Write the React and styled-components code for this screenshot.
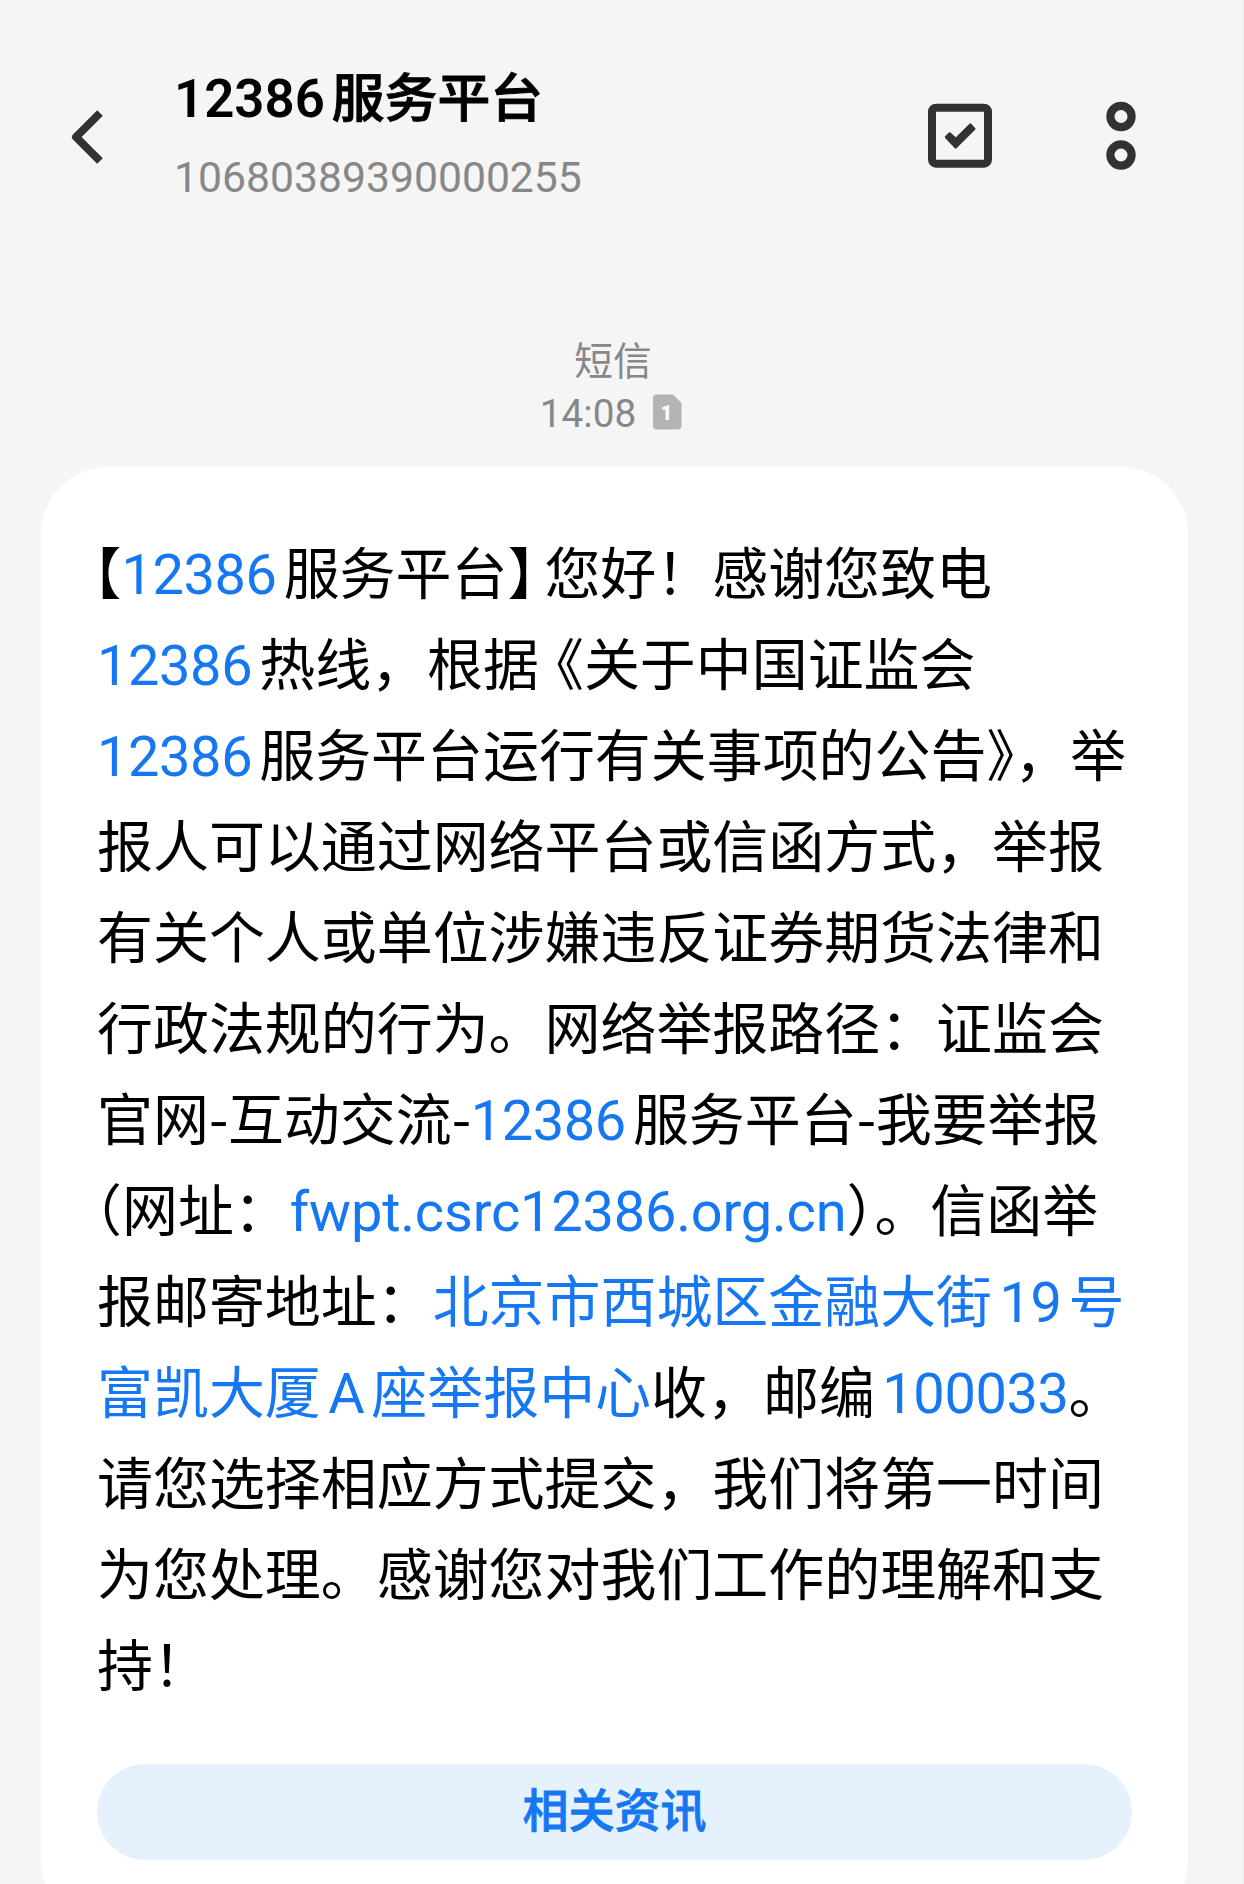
import React from "react";
import styled, { createGlobalStyle } from "styled-components";

const GlobalStyle = createGlobalStyle`
  * {
    box-sizing: border-box;
  }
  body {
    margin: 0;
    background: #f5f5f5;
    font-family: Roboto, "Noto Sans CJK SC", sans-serif;
    text-spacing-trim: space-all;
    text-autospace: no-autospace;
  }
`;

const Page = styled.div`
  height: 1884px;
  overflow: hidden;
  background: #f5f5f5;
  border-right: 1px solid #ececec;
`;

const Header = styled.header`
  display: flex;
  height: 274px;
  padding: 63px 0 0 68px;
`;

const BackButton = styled.div`
  width: 106px;
  padding-top: 44px;
  svg {
    display: block;
  }
`;

const Contact = styled.div`
  width: 754px;
  padding-top: 1px;
`;

const Title = styled.div`
  font-size: 52.8px;
  line-height: 70px;
  font-weight: 500;
  white-space: nowrap;
  color: #000;
  -webkit-text-stroke: 0.9px #000;
`;

const TitleNumber = styled.span`
  font-weight: 600;
  margin-right: 7px;
  -webkit-text-stroke: 0;
`;

const Phone = styled.div`
  margin-top: 13px;
  font-size: 42.7px;
  line-height: 60px;
  color: #878787;
`;

const Actions = styled.div`
  display: flex;
  gap: 114px;
  padding-top: 38px;
`;

const Stamp = styled.div`
  display: flex;
  flex-direction: column;
  align-items: center;
  width: 1226px;
  padding-top: 62px;
  height: 193px;
  font-size: 38.7px;
  line-height: 52px;
  color: #878787;
`;

const StampTime = styled.div`
  display: flex;
  align-items: center;
  gap: 17px;
  padding-right: 4px;
`;

const SimBadge = styled.svg`
  display: block;
  margin-bottom: 4px;
  font-size: 20px;
  font-weight: 900;
`;

const Card = styled.section`
  width: 1147px;
  height: 1461px;
  margin-left: 41px;
  padding: 63px 56px 0;
  border-radius: 67px;
  background: #fff;
`;

const Message = styled.div`
  height: 1234px;
  font-size: 55.95px;
  line-height: 91px;
  color: #000;
`;

const Line = styled.div`
  height: 91px;
  white-space: nowrap;
`;

const Link = styled.span`
  color: #1677f2;
`;

const Url = styled(Link)`
  letter-spacing: -0.18px;
`;

// latin run between chinese characters, spaced by an eighth of an em
const Latin = styled.span`
  letter-spacing: -0.4px;
  margin-left: ${({ $before }) => ($before ? "7.5px" : 0)};
  margin-right: ${({ $after }) => ($after ? "7px" : 0)};
`;

// half width bracket, shifted by the gap on its outer side
const Bracket = styled.span`
  font-family: "Noto Sans CJK SC", sans-serif;
  font-feature-settings: "halt";
  line-height: 1;
  margin-left: ${({ $before }) => $before || 0}px;
  margin-right: ${({ $after }) => $after || 0}px;
`;

const Hyphen = styled.span`
  font-family: "Noto Sans CJK SC", sans-serif;
  line-height: 1;
  letter-spacing: -0.4px;
`;

const InfoButton = styled.div`
  height: 96px;
  border-radius: 48px;
  background: #e5f1fd;
  color: #1677f2;
  font-size: 46px;
  font-weight: 500;
  line-height: 94px;
  text-align: center;
  -webkit-text-stroke: 0.8px #1677f2;
`;

const BackIcon = () => (
  <svg width="40" height="60" viewBox="0 0 40 60" fill="none">
    <path
      d="M32 6 L8 30 L32 54"
      stroke="#323232"
      strokeWidth="8"
      strokeLinejoin="round"
    />
  </svg>
);

const SelectIcon = () => (
  <svg width="64" height="72" viewBox="0 0 64 72" fill="none">
    <rect x="4" y="6.7" width="56" height="56" rx="4" stroke="#323232" strokeWidth="8" />
    <path
      d="M18 36.2 L21.7 32.4 L27.7 38 L42.3 23.6 L46.3 27.8 L27.7 46.4 Z"
      fill="#323232"
      stroke="#323232"
      strokeWidth="2.4"
      strokeLinejoin="round"
    />
  </svg>
);

const MoreIcon = () => (
  <svg width="30" height="72" viewBox="0 0 30 72" fill="none">
    <circle cx="15" cy="15.5" r="10.6" stroke="#323232" strokeWidth="8.2" />
    <circle cx="15" cy="54" r="10.6" stroke="#323232" strokeWidth="8.2" />
  </svg>
);

const SimIcon = () => (
  <SimBadge width="29" height="36" viewBox="0 0 29 36">
    <path
      d="M4 0.5 H20 L28.5 9 V31.5 Q28.5 35.5 24.5 35.5 H4 Q0 35.5 0 31.5 V4.5 Q0 0.5 4 0.5 Z"
      fill="#b4b4b4"
    />
    <text x="13.5" y="25.5" textAnchor="middle" fill="#fff">
      1
    </text>
  </SimBadge>
);

const App = () => {
  return (
    <>
      <GlobalStyle />
      <Page>
        <Header>
          <BackButton>
            <BackIcon />
          </BackButton>
          <Contact>
            <Title>
              <TitleNumber>12386</TitleNumber>服务平台
            </Title>
            <Phone>10680389390000255</Phone>
          </Contact>
          <Actions>
            <SelectIcon />
            <MoreIcon />
          </Actions>
        </Header>

        <Stamp>
          <div>短信</div>
          <StampTime>
            14:08
            <SimIcon />
          </StampTime>
        </Stamp>

        <Card>
          <Message>
            <Line>
              <Bracket $before={-3.5}>【</Bracket>
              <Link><Latin $after>12386</Latin></Link>服务平台
              <Bracket $after={9}>】</Bracket>您好！感谢您致电
            </Line>
            <Line>
              <Link><Latin $after>12386</Latin></Link>热线，根据
              <Bracket $before={17}>《</Bracket>关于中国证监会
            </Line>
            <Line>
              <Link><Latin $after>12386</Latin></Link>服务平台运行有关事项的公告
              <Bracket>》</Bracket>，举
            </Line>
            <Line>报人可以通过网络平台或信函方式，举报</Line>
            <Line>有关个人或单位涉嫌违反证券期货法律和</Line>
            <Line>行政法规的行为。网络举报路径：证监会</Line>
            <Line>
              官网<Hyphen>-</Hyphen>互动交流<Hyphen>-</Hyphen>
              <Link><Latin $after>12386</Latin></Link>服务平台
              <Hyphen>-</Hyphen>我要举报
            </Line>
            <Line>
              <Bracket $before={-3}>（</Bracket>网址：<Url>fwpt.csrc12386.org.cn</Url>
              <Bracket>）</Bracket>。信函举
            </Line>
            <Line>
              报邮寄地址：
              <Link>
                北京市西城区金融大街<Latin $before $after>19</Latin>号
              </Link>
            </Line>
            <Line>
              <Link>
                富凯大厦<Latin $before $after>A</Latin>座举报中心
              </Link>
              收，邮编<Link><Latin $before>100033</Latin></Link>。
            </Line>
            <Line>请您选择相应方式提交，我们将第一时间</Line>
            <Line>为您处理。感谢您对我们工作的理解和支</Line>
            <Line>持！</Line>
          </Message>
          <InfoButton>相关资讯</InfoButton>
        </Card>
      </Page>
    </>
  );
};

export default App;
